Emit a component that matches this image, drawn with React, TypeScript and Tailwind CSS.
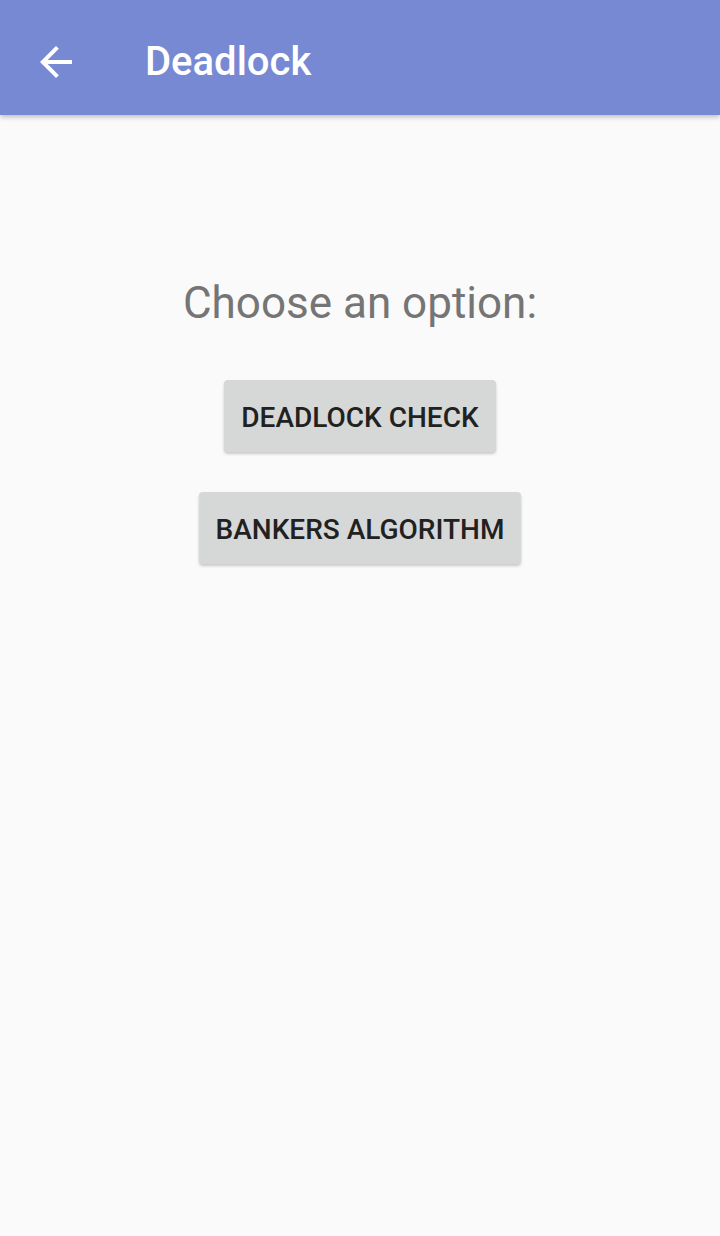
export default function App() {
  return (
    <div className="min-h-[1236px] w-[720px] bg-[#fafafa]" style={{ fontFamily: "Roboto, 'Noto Sans', sans-serif" }}>
      {/* toolbar */}
      <div className="relative z-10 flex h-[115px] items-center bg-[#7889d4] pt-[9px] shadow-[0_2px_5px_rgba(0,0,0,0.25)]">
        <div className="ml-[32px] flex h-[48px] w-[48px] items-center justify-center">
          <svg width="48" height="48" viewBox="0 0 24 24" fill="#ffffff">
            <path d="M20 11H7.83l5.59-5.59L12 4l-8 8 8 8 1.41-1.41L7.83 13H20v-2z" />
          </svg>
        </div>
        <h1 className="ml-[65px] text-[40px] font-medium leading-none text-white">Deadlock</h1>
      </div>

      {/* content */}
      <div className="flex flex-col items-center pt-[160px]">
        <p className="text-[44px] leading-[56px] text-[#757575]">Choose an option:</p>
        <div className="mt-[49px] flex flex-col items-center gap-[40px]">
          <button className="h-[72px] rounded-[4px] bg-[#d6d7d7] px-[17px] pt-[3px] text-[28px] font-medium text-[#212121] shadow-[0_2px_3px_rgba(0,0,0,0.2)]">
            DEADLOCK CHECK
          </button>
          <button className="h-[72px] rounded-[4px] bg-[#d6d7d7] px-[17px] pt-[3px] text-[28px] font-medium text-[#212121] shadow-[0_2px_3px_rgba(0,0,0,0.2)]">
            BANKERS ALGORITHM
          </button>
        </div>
      </div>
    </div>
  );
}
